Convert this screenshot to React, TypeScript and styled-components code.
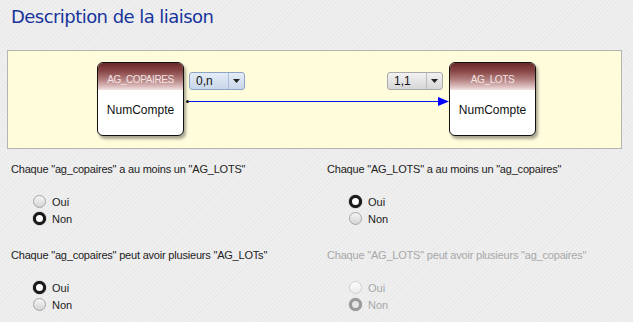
import styled, { createGlobalStyle, css } from 'styled-components';

const GlobalStyle = createGlobalStyle`
  html, body {
    margin: 0;
    padding: 0;
  }
  body {
    width: 633px;
    height: 322px;
    overflow: hidden;
    font-family: 'Liberation Sans', Arial, sans-serif;
    background-color: #eeeeee;
    background-image: repeating-linear-gradient(
      135deg,
      #f0f0f0 0px,
      #f0f0f0 1px,
      #e9e9e9 2px,
      #ebebeb 3px
    );
  }
`;

type Question = {
  text: string;
  value: 'oui' | 'non';
  disabled?: boolean;
};

const questions: Question[] = [
  { text: 'Chaque "ag_copaires" a au moins un "AG_LOTS"', value: 'non' },
  { text: 'Chaque "AG_LOTS" a au moins un "ag_copaires"', value: 'oui' },
  { text: 'Chaque "ag_copaires" peut avoir plusieurs "AG_LOTs"', value: 'oui' },
  { text: 'Chaque "AG_LOTS" peut avoir plusieurs "ag_copaires"', value: 'non', disabled: true },
];

const Entity = ({ name }: { name: string }) => (
  <EntityBox>
    <EntityHeader>{name}</EntityHeader>
    <EntityBody>NumCompte</EntityBody>
  </EntityBox>
);

const Select = ({ value, active }: { value: string; active?: boolean }) => (
  <SelectBox $active={active}>
    <span>{value}</span>
    <SelectArrow $active={active}>
      <svg width="7" height="4" viewBox="0 0 7 4">
        <path d="M0 0h7L3.5 4z" fill="#222" />
      </svg>
    </SelectArrow>
  </SelectBox>
);

const App = () => {
  return (
    <>
      <GlobalStyle />
      <Page>
        <Title>Description de la liaison</Title>
        <Canvas>
          <Entity name="AG_COPAIRES" />
          <Link>
            <Cards>
              <Select value="0,n" active />
              <Select value="1,1" />
            </Cards>
            <Line>
              <Dot />
              <Stroke />
              <svg width="11" height="9" viewBox="0 0 11 9">
                <path d="M0 0L11 4.5L0 9z" fill="#0000ff" />
              </svg>
            </Line>
          </Link>
          <Entity name="AG_LOTS" />
        </Canvas>
        <Questions>
          {questions.map((q) => (
            <QuestionBlock key={q.text}>
              <QuestionText $disabled={q.disabled}>{q.text}</QuestionText>
              <Options>
                <Option $disabled={q.disabled}>
                  <Radio $checked={q.value === 'oui'} $disabled={q.disabled} />
                  Oui
                </Option>
                <Option $disabled={q.disabled}>
                  <Radio $checked={q.value === 'non'} $disabled={q.disabled} />
                  Non
                </Option>
              </Options>
            </QuestionBlock>
          ))}
        </Questions>
      </Page>
    </>
  );
};

const Page = styled.div`
  display: flex;
  flex-direction: column;
`;

const Title = styled.h1`
  margin: 0;
  padding: 6px 0 0 11px;
  height: 50px;
  box-sizing: border-box;
  font-family: 'DejaVu Sans', Verdana, sans-serif;
  font-weight: normal;
  font-size: 18px;
  letter-spacing: -0.55px;
  color: #17349c;
`;

const Canvas = styled.div`
  margin: 0 11px 0 7px;
  height: 99px;
  box-sizing: border-box;
  border: 1px solid #b4b4b4;
  background: #fffcdc;
  display: flex;
  align-items: flex-start;
  padding: 11px 85px 0 89px;
`;

const EntityBox = styled.div`
  width: 87px;
  height: 74px;
  box-sizing: border-box;
  border: 1px solid #111;
  border-radius: 6px;
  background: #fff;
  overflow: hidden;
  box-shadow: 2px 3px 3px rgba(0, 0, 0, 0.35);
  display: flex;
  flex-direction: column;
  flex-shrink: 0;
`;

const EntityHeader = styled.div`
  height: 27px;
  box-sizing: border-box;
  padding-top: 11px;
  text-align: center;
  font-size: 10px;
  letter-spacing: -0.4px;
  color: #f4e4e4;
  background: linear-gradient(#6a2a2a 0%, #8a4646 30%, #b07c7c 60%, #d9b8b8 85%, #f1e2e2 100%);
`;

const EntityBody = styled.div`
  flex: 1;
  display: flex;
  align-items: flex-start;
  justify-content: center;
  padding-top: 13px;
  font-size: 12px;
  color: #111;
`;

const Link = styled.div`
  flex: 1;
  display: flex;
  flex-direction: column;
  padding-top: 10px;
`;

const Cards = styled.div`
  display: flex;
  justify-content: space-between;
  padding: 0 6px 0 5px;
`;

const SelectBox = styled.div<{ $active?: boolean }>`
  width: 56px;
  height: 18px;
  box-sizing: border-box;
  border-radius: 3px;
  display: flex;
  align-items: center;
  font-size: 12px;
  color: #111;
  padding-left: 6px;
  ${({ $active }) =>
    $active
      ? css`
          border: 1px solid #8ea4c4;
          background: linear-gradient(#e4ecf7, #c9d7ea);
        `
      : css`
          border: 1px solid #aaa;
          background: linear-gradient(#f2f2f2, #d6d6d6);
        `}

  span {
    flex: 1;
  }
`;

const SelectArrow = styled.div<{ $active?: boolean }>`
  width: 15px;
  height: 100%;
  display: flex;
  align-items: center;
  justify-content: center;
  border-left: 1px solid ${({ $active }) => ($active ? '#a9bcd8' : '#bdbdbd')};
`;

const Line = styled.div`
  display: flex;
  align-items: center;
  height: 9px;
  margin-top: 7px;
  padding-left: 2px;
`;

const Dot = styled.span`
  width: 3px;
  height: 3px;
  border-radius: 50%;
  background: #111;
`;

const Stroke = styled.span`
  flex: 1;
  height: 0;
  border-top: 1px solid #0a14f5;
`;

const Questions = styled.div`
  display: grid;
  grid-template-columns: 316px 1fr;
  padding: 14px 0 0 11px;
  row-gap: 7px;
`;

const QuestionBlock = styled.div`
  display: flex;
  flex-direction: column;
  height: 79px;
`;

const QuestionText = styled.div<{ $disabled?: boolean }>`
  font-size: 11px;
  letter-spacing: -0.2px;
  color: ${({ $disabled }) => ($disabled ? '#a8a8a8' : '#222')};
`;

const Options = styled.div`
  display: flex;
  flex-direction: column;
  gap: 4px;
  padding: 20px 0 0 22px;
`;

const Option = styled.label<{ $disabled?: boolean }>`
  display: flex;
  align-items: center;
  gap: 6px;
  font-size: 11px;
  height: 13px;
  color: ${({ $disabled }) => ($disabled ? '#a8a8a8' : '#222')};
`;

const Radio = styled.span<{ $checked?: boolean; $disabled?: boolean }>`
  width: 13px;
  height: 13px;
  box-sizing: border-box;
  border-radius: 50%;
  ${({ $checked, $disabled }) =>
    $checked
      ? css`
          border: 3px solid ${$disabled ? '#9a9a9a' : '#1a1a1a'};
          background: ${$disabled ? '#e6e6e6' : '#fff'};
          box-shadow: 0 0 1px ${$disabled ? '#999' : '#000'};
        `
      : css`
          border: 1px solid ${$disabled ? '#d0d0d0' : '#a6a6a6'};
          background: ${$disabled
            ? 'linear-gradient(#fbfbfb, #ececec)'
            : 'linear-gradient(#f6f6f6, #d4d4d4)'};
        `}
`;

export default App;
